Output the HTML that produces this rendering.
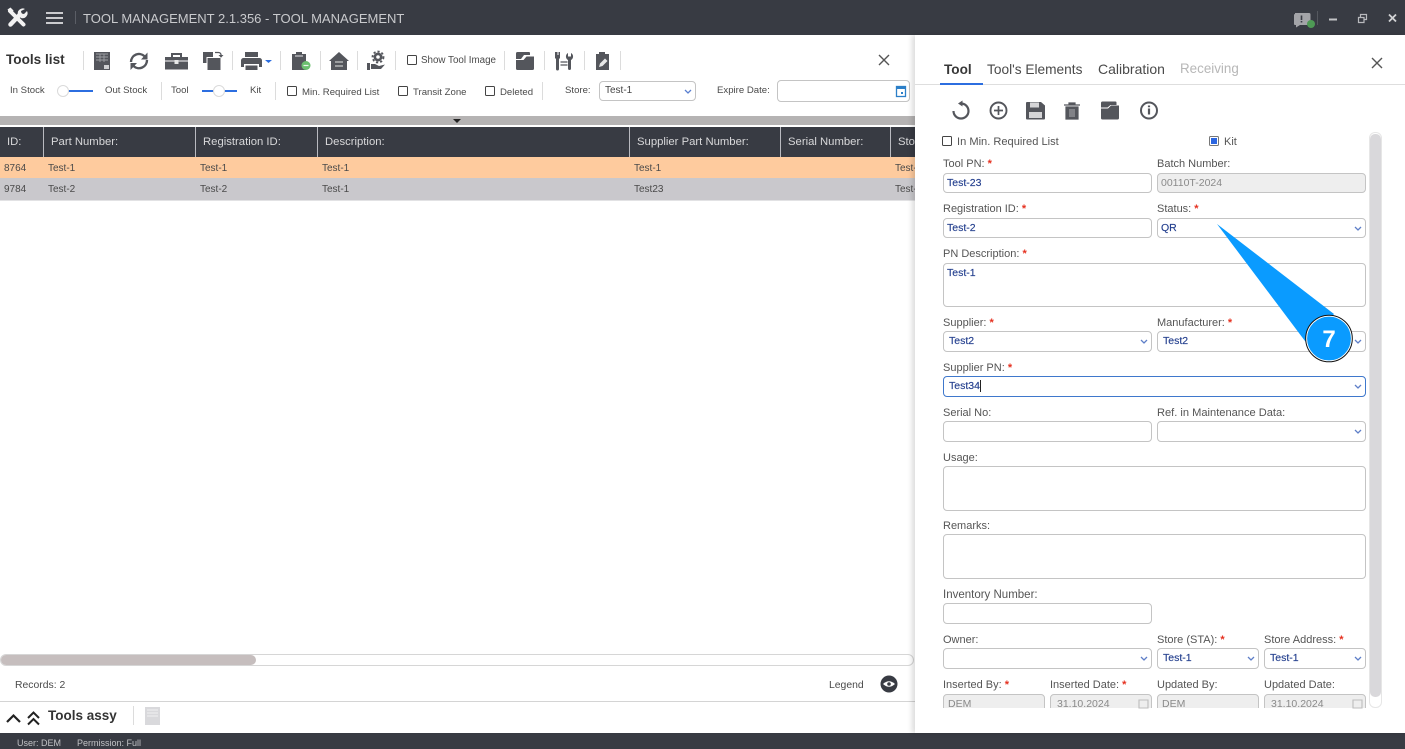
<!DOCTYPE html>
<html><head><meta charset="utf-8"><title>Tool Management</title>
<style>
html,body{margin:0;padding:0;background:#fff}
#p{position:relative;width:1405px;height:749px;overflow:hidden;background:#fff;font-family:"Liberation Sans",sans-serif;color:#444;filter:blur(.3px)}
.t{position:absolute;white-space:nowrap;font-size:10.5px;line-height:14px;color:#4a4a4a;transform:translateY(1px)}
.l{position:absolute;white-space:nowrap;font-size:11px;line-height:14px;color:#555;transform:translateY(1px)}
.l b{color:#e5301f;font-weight:700}
.i{position:absolute;box-sizing:border-box;border:1px solid #c4c4c4;border-radius:4px;background:#fff;font-size:10.5px;line-height:18px;color:#25408f;-webkit-text-stroke:.15px #25408f;padding-left:3px;white-space:nowrap}
.d{background:#eeeeee;color:#8a8a8a;-webkit-text-stroke:0}
.h{position:absolute;top:127px;height:30px;line-height:29px;color:#d8d8da;font-size:11.3px;white-space:nowrap;transform:translateY(1px)}
.s{position:absolute;top:127px;width:1px;height:30px;background:#b9bac0}
.c{position:absolute;white-space:nowrap;font-size:10px;line-height:14px;color:#4a4a4a;transform:translateY(1px)}
.k{position:absolute;box-sizing:border-box;width:10px;height:10px;border:1.2px solid #444;border-radius:1.5px;background:#fff}
.v{position:absolute;width:1px;background:#dcdcdc}
svg{position:absolute;left:0;top:0}
</style></head><body><div id="p">

<div style="position:absolute;left:0;top:0;width:1405px;height:35px;background:#383b43"></div>
<div class="t" style="left:83px;top:10px;font-size:13.02px;line-height:16px;color:#c9cacd">TOOL MANAGEMENT 2.1.356 - TOOL MANAGEMENT</div>
<div style="position:absolute;left:75px;top:11px;width:1px;height:13px;background:#5b5e66"></div>

<!-- left toolbar text -->
<div class="t" style="left:6px;top:51px;font-size:13.6px;line-height:16px;font-weight:700;color:#333">Tools list</div>
<div class="k" style="left:407px;top:55px"></div>
<div class="t" style="left:421px;top:53px;font-size:9.8px">Show Tool Image</div>
<div class="t" style="left:10px;top:83px;font-size:9.6px">In Stock</div>
<div class="t" style="left:105px;top:83px;font-size:9.6px">Out Stock</div>
<div class="t" style="left:171px;top:83px;font-size:9.6px">Tool</div>
<div class="t" style="left:250px;top:83px;font-size:9.6px">Kit</div>
<div class="k" style="left:287px;top:86px"></div>
<div class="t" style="left:302px;top:85px;font-size:9.6px">Min. Required List</div>
<div class="k" style="left:398px;top:86px"></div>
<div class="t" style="left:413px;top:85px;font-size:9.6px">Transit Zone</div>
<div class="k" style="left:485px;top:86px"></div>
<div class="t" style="left:500px;top:85px;font-size:9.6px">Deleted</div>
<div class="t" style="left:565px;top:83px;font-size:9.6px">Store:</div>
<div class="i" style="left:599px;top:81px;width:97px;height:20px;color:#444;-webkit-text-stroke:0;padding-left:5px;font-size:10px;line-height:18px">Test-1</div>
<div class="t" style="left:717px;top:83px;font-size:9.6px">Expire Date:</div>
<div class="i" style="left:777px;top:80px;width:133px;height:22px"></div>

<!-- separators -->
<div class="v" style="left:83px;top:51px;height:19px"></div>
<div class="v" style="left:161px;top:82px;height:18px"></div>
<div class="v" style="left:275px;top:82px;height:18px"></div>
<div class="v" style="left:542px;top:82px;height:18px"></div>
<div class="v" style="left:232px;top:51px;height:19px"></div>
<div class="v" style="left:280px;top:51px;height:19px"></div>
<div class="v" style="left:320px;top:51px;height:19px"></div>
<div class="v" style="left:357px;top:51px;height:19px"></div>
<div class="v" style="left:395px;top:51px;height:19px"></div>
<div class="v" style="left:504px;top:51px;height:19px"></div>
<div class="v" style="left:544px;top:51px;height:19px"></div>
<div class="v" style="left:584px;top:51px;height:19px"></div>
<div class="v" style="left:620px;top:51px;height:19px"></div>

<!-- table -->
<div style="position:absolute;left:0;top:116px;width:915px;height:9px;background:#b5b3b3"></div>
<div style="position:absolute;left:0;top:127px;width:915px;height:30px;background:#383b43"></div>
<div style="position:absolute;left:0;top:157px;width:915px;height:21px;background:#fecb9e"></div>
<div style="position:absolute;left:0;top:178px;width:915px;height:22px;background:#c9c8cc"></div>
<div style="position:absolute;left:0;top:200px;width:915px;height:1px;background:#e2e2e4"></div>
<div class="s" style="left:43px"></div><div class="s" style="left:195px"></div><div class="s" style="left:317px"></div><div class="s" style="left:629px"></div><div class="s" style="left:780px"></div><div class="s" style="left:890px"></div>
<div class="h" style="left:7px">ID:</div>
<div class="h" style="left:51px">Part Number:</div>
<div class="h" style="left:203px">Registration ID:</div>
<div class="h" style="left:325px">Description:</div>
<div class="h" style="left:637px">Supplier Part Number:</div>
<div class="h" style="left:788px">Serial Number:</div>
<div class="h" style="left:898px">Sto</div>
<div class="c" style="left:4px;top:161px">8764</div><div class="c" style="left:48px;top:161px">Test-1</div><div class="c" style="left:200px;top:161px">Test-1</div><div class="c" style="left:322px;top:161px">Test-1</div><div class="c" style="left:634px;top:161px">Test-1</div><div class="c" style="left:895px;top:161px">Test-1</div>
<div class="c" style="left:4px;top:182px">9784</div><div class="c" style="left:48px;top:182px">Test-2</div><div class="c" style="left:200px;top:182px">Test-2</div><div class="c" style="left:322px;top:182px">Test-1</div><div class="c" style="left:634px;top:182px">Test23</div><div class="c" style="left:895px;top:182px">Test-1</div>

<!-- bottom left -->
<div style="position:absolute;left:0;top:654px;width:914px;height:12px;box-sizing:border-box;border:1px solid #d6d6d6;border-radius:6px;background:#fff"></div>
<div style="position:absolute;left:1px;top:655px;width:255px;height:10px;border-radius:5px;background:#c6bebe"></div>
<div class="t" style="left:15px;top:678px;font-size:10.4px">Records: 2</div>
<div class="t" style="left:829px;top:678px;font-size:10.4px">Legend</div>
<div style="position:absolute;left:0;top:701px;width:915px;height:1px;background:#d4d4d4"></div>
<div class="t" style="left:48px;top:707px;font-size:13.5px;line-height:16px;font-weight:700;color:#333">Tools assy</div>
<div class="v" style="left:133px;top:706px;height:19px"></div>
<div style="position:absolute;left:0;top:733px;width:1405px;height:16px;background:#383b43"></div>
<div class="t" style="left:17px;top:736px;font-size:9px;line-height:12px;color:#c2c3c6">User: DEM</div>
<div class="t" style="left:77px;top:736px;font-size:9px;line-height:12px;color:#c2c3c6">Permission: Full</div>

<!-- right panel -->
<div style="position:absolute;left:915px;top:35px;width:490px;height:698px;background:#fff;box-shadow:-3px 0 5px rgba(0,0,0,.14)"></div>
<div style="position:absolute;left:915px;top:84px;width:490px;height:1px;background:#dedede"></div>
<div style="position:absolute;left:940px;top:83px;width:43px;height:2px;background:#2c6ee0"></div>
<div class="t" style="left:944px;top:61px;font-size:13.6px;line-height:16px;font-weight:700;color:#383838">Tool</div>
<div class="t" style="left:987px;top:61px;font-size:13.7px;line-height:16px;color:#4a4a4a">Tool's Elements</div>
<div class="t" style="left:1098px;top:60px;font-size:14px;line-height:16px;color:#4a4a4a">Calibration</div>
<div class="t" style="left:1180px;top:60px;font-size:13.4px;line-height:16px;color:#b7b7b7">Receiving</div>

<div class="k" style="left:942px;top:136px"></div>
<div class="l" style="left:957px;top:134px;font-size:11.1px">In Min. Required List</div>
<div class="k" style="left:1209px;top:136px;border-color:#777;background:#2c66e0;box-shadow:inset 0 0 0 1px #fff"></div>
<div class="l" style="left:1224px;top:134px;font-size:11px">Kit</div>

<div style="position:absolute;left:915px;top:130px;width:455px;height:578px;overflow:hidden">
<div style="position:absolute;left:-915px;top:-130px;width:1405px;height:749px">
<div class="l" style="left:943px;top:156px">Tool PN: <b>*</b></div>
<div class="i" style="left:943px;top:173px;width:209px;height:20px">Test-23</div>
<div class="l" style="left:1157px;top:156px">Batch Number:</div>
<div class="i d" style="left:1157px;top:173px;width:209px;height:20px">00110T-2024</div>
<div class="l" style="left:943px;top:201px">Registration ID: <b>*</b></div>
<div class="i" style="left:943px;top:218px;width:209px;height:20px">Test-2</div>
<div class="l" style="left:1157px;top:201px">Status: <b>*</b></div>
<div class="i" style="left:1157px;top:218px;width:209px;height:20px">QR</div>
<div class="l" style="left:943px;top:246px">PN Description: <b>*</b></div>
<div class="i" style="left:943px;top:263px;width:423px;height:44px">Test-1</div>
<div class="l" style="left:943px;top:315px">Supplier: <b>*</b></div>
<div class="i" style="left:943px;top:331px;width:209px;height:21px;padding-left:5px;line-height:19px">Test2</div>
<div class="l" style="left:1157px;top:315px">Manufacturer: <b>*</b></div>
<div class="i" style="left:1157px;top:331px;width:209px;height:21px;padding-left:5px;line-height:19px">Test2</div>
<div class="l" style="left:943px;top:360px">Supplier PN: <b>*</b></div>
<div class="i" style="left:943px;top:376px;width:423px;height:21px;border-color:#3f78cc;padding-left:5px">Test34<span style="border-left:1px solid #222;margin-left:0"></span></div>
<div class="l" style="left:943px;top:405px">Serial No:</div>
<div class="i" style="left:943px;top:421px;width:209px;height:21px"></div>
<div class="l" style="left:1157px;top:405px;font-size:11.1px">Ref. in Maintenance Data:</div>
<div class="i" style="left:1157px;top:421px;width:209px;height:21px"></div>
<div class="l" style="left:943px;top:450px">Usage:</div>
<div class="i" style="left:943px;top:466px;width:423px;height:45px"></div>
<div class="l" style="left:943px;top:518px">Remarks:</div>
<div class="i" style="left:943px;top:534px;width:423px;height:45px"></div>
<div class="l" style="left:943px;top:587px;font-size:11.5px">Inventory Number:</div>
<div class="i" style="left:943px;top:603px;width:209px;height:21px"></div>
<div class="l" style="left:943px;top:632px">Owner:</div>
<div class="i" style="left:943px;top:648px;width:209px;height:21px"></div>
<div class="l" style="left:1157px;top:632px">Store (STA): <b>*</b></div>
<div class="i" style="left:1157px;top:648px;width:102px;height:21px;padding-left:5px;line-height:19px">Test-1</div>
<div class="l" style="left:1264px;top:632px">Store Address: <b>*</b></div>
<div class="i" style="left:1264px;top:648px;width:102px;height:21px;padding-left:5px;line-height:19px">Test-1</div>
<div class="l" style="left:943px;top:677px">Inserted By: <b>*</b></div>
<div class="i d" style="left:943px;top:694px;width:102px;height:21px;padding-left:4px">DEM</div>
<div class="l" style="left:1050px;top:677px">Inserted Date: <b>*</b></div>
<div class="i d" style="left:1050px;top:694px;width:102px;height:21px;padding-left:6px">31.10.2024</div>
<div class="l" style="left:1157px;top:677px">Updated By:</div>
<div class="i d" style="left:1157px;top:694px;width:102px;height:21px;padding-left:4px">DEM</div>
<div class="l" style="left:1264px;top:677px">Updated Date:</div>
<div class="i d" style="left:1264px;top:694px;width:102px;height:21px;padding-left:6px">31.10.2024</div>
</div></div>

<!-- scrollbar -->
<div style="position:absolute;left:1369px;top:132px;width:13px;height:576px;box-sizing:border-box;border:1px solid #e6e6e6;border-radius:6px;background:#fff"></div>
<div style="position:absolute;left:1370px;top:134px;width:11px;height:563px;border-radius:5px;background:#d9d8db"></div>

<svg width="1405" height="749" viewBox="0 0 1405 749">
<!-- app logo -->
<g fill="none" stroke="#f2f2f2" stroke-linecap="round">
<path d="M10 11L23.500 24.500" stroke-width="4"/>
<path d="M20 14.500L10.500 24.500" stroke-width="4.500"/>
</g>
<path d="M25 9a5 5 0 0 0-7 6l3 3a5 5 0 0 0 6-7l-3 3-2.500-.5-.5-2.500z" fill="#f2f2f2"/>
<path d="M7.500 9.500l3-2 3 3-1 2-2 1z" fill="#f2f2f2"/>
<path d="M46 13h17M46 18h17M46 23h17" stroke="#e0e0e2" stroke-width="1.800"/>
<!-- window controls -->
<path d="M1295 13h14a1.500 1.500 0 0 1 1.500 1.500v9a1.500 1.500 0 0 1-1.500 1.500h-9l-4 2.500v-2.500h-1a1 1 0 0 1-1-1v-9a1 1 0 0 1 1-1z" fill="#a3a4a8"/>
<path d="M1301.500 15.500v4.500M1301.500 21v1.500" stroke="#383b43" stroke-width="1.600"/>
<circle cx="1311" cy="24" r="4" fill="#4e9a55"/>
<rect x="1317" y="11" width="1" height="14" fill="#55585f"/>
<rect x="1329" y="18.500" width="8" height="2" fill="#c2c3c6"/>
<path d="M1358.500 17.500h5.500v5h-5.500zM1360.500 17v-2.500h6v5h-2" fill="none" stroke="#b8b9bd" stroke-width="1.200"/>
<path d="M1389 14.500l7 7M1396 14.500l-7 7" stroke="#d2d3d5" stroke-width="1.800"/>

<!-- toolbar: excel -->
<g fill="#54565c">
<path d="M94 52h16v18h-16z"/>
<path d="M96 54h12M96 57h12M96 60h12M100 54v8M104 54v8" stroke="#9c9da2" stroke-width=".9"/>
<rect x="104" y="65" width="5" height="4" fill="#cfd0d2"/>
</g>
<!-- refresh -->
<g fill="none" stroke="#54565c" stroke-width="2.400">
<path d="M131 62a8 8 0 0 1 13.500-5.800"/><path d="M147 60a8 8 0 0 1-13.500 6"/>
</g>
<path d="M147.500 52.500v7h-6.500zM130.500 70v-7h6.500z" fill="#54565c"/>
<!-- toolbox -->
<path d="M165 57h6v-4h11v4h6v12.500h-23zM173 55v2h7v-2z" fill="#54565c" fill-rule="evenodd"/>
<rect x="165" y="60.500" width="23" height="1" fill="#fff"/>
<rect x="174.500" y="60" width="4" height="4" fill="#e8e8e8"/>
<!-- copy with arrow -->
<path d="M203 52h10v11h-10z" fill="#54565c"/>
<path d="M207 57.500h14v13h-14z" fill="#54565c" stroke="#fff" stroke-width="1"/>
<path d="M215 52.500h3.500a2.500 2.500 0 0 1 2.500 2.500v1" fill="none" stroke="#54565c" stroke-width="1.300"/>
<path d="M218.500 55h5l-2.500 2.700z" fill="#54565c"/>
<!-- printer -->
<path d="M245 52h13v5h-13zM243.500 58h16a2.500 2.500 0 0 1 2.500 2.500v6.500h-3v-3h-15v3h-3v-6.500a2.500 2.500 0 0 1 2.500-2.500zM245.500 65.500h12v4.500h-12z" fill="#54565c"/>
<path d="M265 60h7l-3.500 3z" fill="#2c6ee0"/>
<!-- clipboard -->
<path d="M292 54h4v-2h6v2h4v16h-14z" fill="#54565c"/>
<rect x="295" y="55" width="8" height="2" fill="#9c9da2"/>
<circle cx="306" cy="65.500" r="4.500" fill="#6cc070"/>
<path d="M303.500 65.500h5" stroke="#e8f4e8" stroke-width="1.200"/>
<!-- home -->
<path d="M339 52l10 9h-2v9h-16v-9h-2z" fill="#54565c"/>
<path d="M335 62h8M335 66h8" stroke="#e5e5e5" stroke-width="1"/>
<!-- hand gear -->
<circle cx="378" cy="57" r="4.500" fill="#54565c"/><circle cx="378" cy="57" r="5.500" fill="none" stroke="#54565c" stroke-width="1.800" stroke-dasharray="2.200 2"/>
<circle cx="378" cy="57" r="1.800" fill="#fff"/>
<path d="M367 63h3v7h-3zM371 64h4l4 2 6-1.500-4 4.500h-10z" fill="#54565c"/>
<!-- folder -->
<path d="M516 59v-5.500a1.500 1.500 0 0 1 1.500-1.500h11.500a1 1 0 0 1 1 1v2h-6l-3 4z" fill="#54565c"/>
<path d="M516 60h7.500l3-3.500h7.500v12a1.500 1.500 0 0 1-1.500 1.500h-15a1.500 1.500 0 0 1-1.500-1.500z" fill="#54565c"/>
<!-- tools -->
<path d="M555.500 52h2v3h1v-3h1.500v6l-1 1v10a1.500 1.500 0 0 1-3 0v-10l-1-1v-6zM568 53a4 4 0 0 0 0 7v8.500a1.500 1.500 0 0 0 3 0V60a4 4 0 0 0 0-7v3.500h-3z" fill="#54565c"/>
<path d="M560.500 62h7M560.500 65h7" stroke="#54565c" stroke-width="1.200"/>
<!-- clipboard pen -->
<path d="M596 54h3v-2h6v2h4v16h-13z" fill="#54565c"/>
<path d="M599 67l1-3.500 5-5 2.500 2.500-5 5z" fill="#e8e8e8"/>
<!-- close -->
<path d="M879 55l10 10M889 55l-10 10" stroke="#555" stroke-width="1.400"/>
<path d="M1372 58l10 10M1382 58l-10 10" stroke="#555" stroke-width="1.400"/>

<!-- toggles -->
<path d="M66 91h27" stroke="#2c6ee0" stroke-width="2"/>
<circle cx="63" cy="91" r="5.500" fill="#fff" stroke="#dadada"/>
<path d="M202 91h35" stroke="#2c6ee0" stroke-width="2"/>
<circle cx="219" cy="91" r="5.500" fill="#fff" stroke="#dadada"/>
<!-- splitter arrow -->
<path d="M453 119h8l-4 4z" fill="#222"/>
<!-- store chevron, calendar -->
<path d="M685 90l3 3 3-3" fill="none" stroke="#5a7fd0" stroke-width="1.300"/>
<rect x="896.500" y="86.500" width="9" height="10" fill="none" stroke="#2c7fc8" stroke-width="1.300"/>
<rect x="896" y="86" width="10" height="3" fill="#2c7fc8"/><rect x="901" y="92" width="2" height="2" fill="#2c7fc8"/>

<!-- legend eye -->
<circle cx="889" cy="684" r="8.500" fill="#383b43"/>
<path d="M883 684q6-5.500 12 0q-6 5.500-12 0z" fill="#fff"/><circle cx="889" cy="684" r="1.800" fill="#383b43"/>
<!-- bottom chevrons -->
<path d="M7 722l6.500-6.500 6.500 6.500" fill="none" stroke="#222" stroke-width="2.200"/>
<path d="M28 718l5.500-5.500 5.500 5.500M28 724.500l5.500-5.500 5.500 5.500" fill="none" stroke="#222" stroke-width="2"/>
<path d="M145 707h15v18h-15z" fill="#d9d9dc"/>
<path d="M147 710h11M147 713h11M147 716h11" stroke="#f1f1f2"/>

<!-- panel icons -->
<path d="M961 103.500a7.500 7.500 0 1 1-7.500 7.500" fill="none" stroke="#54565c" stroke-width="2.200"/>
<path d="M962.500 100.500v6l-4.500-3z" fill="#54565c"/>
<circle cx="998.500" cy="110.500" r="8" fill="none" stroke="#54565c" stroke-width="1.900"/>
<path d="M994 110.500h9M998.500 106v9" stroke="#54565c" stroke-width="1.700"/>
<path d="M1027 102h14l4 3.500v13a1 1 0 0 1-1 1h-17a1 1 0 0 1-1-1v-15.500a1 1 0 0 1 1-1z" fill="#54565c"/>
<rect x="1030" y="102.500" width="9" height="5" fill="#d5d5d7"/><rect x="1029" y="112" width="13" height="6" fill="#d5d5d7"/>
<path d="M1064 105h16M1069 105v-2h6v2M1066 107h12v12h-12z" fill="#54565c" stroke="#54565c" stroke-width="1.200"/>
<path d="M1070 109v8M1072 109v8M1074 109v8" stroke="#c5c5c8" stroke-width=".8"/>
<path d="M1101 107.500v-4.500a1.500 1.500 0 0 1 1.500-1.500h13a1 1 0 0 1 1 1v2.500h-6l-3 2.500z" fill="#54565c"/>
<path d="M1101 108.500h7l3-3h8v12.500a1.500 1.500 0 0 1-1.500 1.500h-15a1.500 1.500 0 0 1-1.500-1.500z" fill="#54565c"/>
<circle cx="1149" cy="110.500" r="8" fill="none" stroke="#54565c" stroke-width="2"/>
<path d="M1149 105.500v1.800M1149 108.500v6" stroke="#54565c" stroke-width="2.200"/>

<!-- form chevrons -->
<g fill="none" stroke="#5f7fc8" stroke-width="1.300">
<path d="M1355 227l3 3 3-3M1141 340l3 3 3-3M1355 340l3 3 3-3M1355 385l3 3 3-3M1355 430l3 3 3-3M1141 657l3 3 3-3M1248 657l3 3 3-3M1355 657l3 3 3-3"/>
</g>

<!-- date icons (clipped) -->
<g fill="none" stroke="#bdbdbd" stroke-width="1.100">
<path d="M1139 700h9v8h-9zM1353 700h9v8h-9z"/>
</g>

<!-- callout -->
<path d="M1217 224L1334 314 1308 345z" fill="#0a9bff"/>
<circle cx="1329" cy="338.500" r="22.500" fill="#0a9bff" stroke="#fff" stroke-width="1.200"/>
<circle cx="1329" cy="338.500" r="23.300" fill="none" stroke="#111" stroke-width="1"/>
<text x="1329" y="347" text-anchor="middle" font-family="Liberation Sans,sans-serif" font-size="24" font-weight="700" fill="#fff">7</text>
</svg>

</div></body></html>
